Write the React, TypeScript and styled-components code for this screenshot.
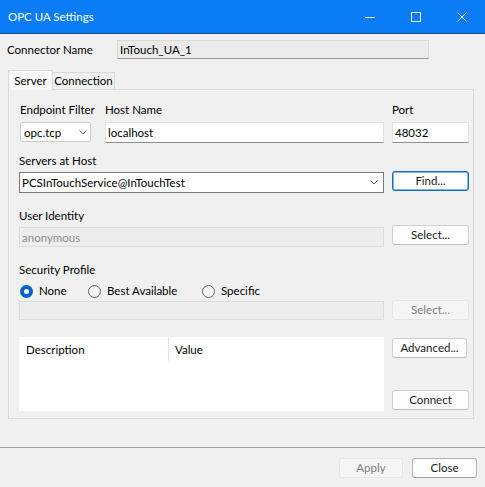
import React from "react";
import styled, { createGlobalStyle, css } from "styled-components";

const UI_FONT = `Lato, "Noto Sans", sans-serif`;
const UI_SIZE = "11.5px";

const GlobalStyle = createGlobalStyle`
  html, body {
    margin: 0;
    padding: 0;
    background: #f0f0f0;
  }
  body {
    font-family: ${UI_FONT};
    font-size: ${UI_SIZE};
    color: #000;
  }
  *, *::before, *::after {
    box-sizing: border-box;
  }
`;

/* ---------- window frame ---------- */

const Window = styled.div`
  width: 485px;
  height: 487px;
  display: flex;
  flex-direction: column;
  background: #f0f0f0;
  overflow: hidden;
`;

const TitleBar = styled.div`
  flex: none;
  height: 34px;
  display: flex;
  align-items: center;
  background: #0a7cf6;
  border-bottom: 1px solid #1d4f86;
  color: #fff;
`;

const Title = styled.div`
  flex: 1;
  padding-left: 8px;
  font-size: 11.5px;
  line-height: 16px;
`;

const CaptionButton = styled.div`
  width: 46px;
  height: 33px;
  display: flex;
  align-items: center;
  justify-content: center;
`;

const Content = styled.div`
  flex: 1;
  display: flex;
  flex-direction: column;
  padding-top: 6px;
`;

/* ---------- connector name ---------- */

const ConnectorRow = styled.div`
  display: flex;
  align-items: center;
  padding-left: 7px;
  height: 19px;
`;

const RowLabel = styled.div`
  width: 110px;
  line-height: 16px;
`;

const ReadonlyBox = styled.div`
  width: 312px;
  height: 19px;
  padding-left: 2px;
  display: flex;
  align-items: center;
  background: #ebebeb;
  border: 1px solid #d9d9d9;
  border-bottom-color: #9a9a9a;
`;

/* ---------- tabs ---------- */

const TabArea = styled.div`
  margin: 11px 11px 0 8px;
  display: flex;
  flex-direction: column;
`;

const TabStrip = styled.div`
  display: flex;
  align-items: flex-end;
  height: 20px;
  margin-bottom: -1px;
  position: relative;
  z-index: 1;
`;

const Tab = styled.div<{ $active?: boolean; $w: number }>`
  width: ${(p) => p.$w}px;
  display: flex;
  align-items: center;
  justify-content: center;
  border: 1px solid #d9d9d9;
  border-bottom: none;
  line-height: 16px;
  white-space: nowrap;
  ${(p) =>
    p.$active
      ? css`
          height: 20px;
          background: #f9f9f9;
        `
      : css`
          height: 17px;
          margin-bottom: 1px;
          margin-left: -1px;
          background: #f0f0f0;
        `}
`;

const TabPanel = styled.div`
  border: 1px solid #dadada;
  padding: 12px 5px 7px 10px;
  display: flex;
  flex-direction: column;
`;

/* ---------- form layout ---------- */

const Section = styled.div<{ $top: number; $rowGap?: number }>`
  display: grid;
  grid-template-columns: 365px 77px;
  column-gap: 8px;
  row-gap: ${(p) => p.$rowGap ?? 3}px;
  margin-top: ${(p) => p.$top}px;
  align-items: start;
`;

const EndpointGrid = styled.div`
  display: grid;
  grid-template-columns: 71px 279px;
  column-gap: 14px;
  row-gap: 4px;
  margin-left: 1px;
`;

const PortStack = styled.div`
  display: flex;
  flex-direction: column;
  gap: 4px;
`;

const FieldLabel = styled.div`
  grid-column: 1;
  line-height: 16px;
  height: 16px;
  white-space: nowrap;
`;

const EndpointLabel = styled(FieldLabel)`
  grid-column: auto;
`;

const MainCell = styled.div<{ $top?: number }>`
  grid-column: 1;
  margin-top: ${(p) => p.$top ?? 0}px;
`;

const SideCell = styled.div<{ $row: number; $nudge?: number }>`
  grid-column: 2;
  grid-row: ${(p) => p.$row};
  margin-top: ${(p) => p.$nudge ?? 0}px;
`;

const TextBox = styled.div`
  height: 21px;
  display: flex;
  align-items: center;
  padding-left: 2px;
  background: #fff;
  border: 1px solid #e3e3e3;
  border-bottom-color: #8e8e8e;
  white-space: nowrap;
`;

const DisabledBox = styled.div<{ $h: number }>`
  height: ${(p) => p.$h}px;
  display: flex;
  align-items: center;
  padding-left: 2px;
  background: #ededed;
  border: 1px solid #dcdcdc;
  color: #8d8d8d;
`;

const Combo = styled.div<{ $strong?: boolean }>`
  height: ${(p) => (p.$strong ? 21 : 20)}px;
  display: flex;
  align-items: center;
  justify-content: space-between;
  background: #fff;
  white-space: nowrap;
  ${(p) =>
    p.$strong
      ? css`
          border: 1px solid #7a7a7a;
          padding: 0 5px 0 2px;
        `
      : css`
          border: 1px solid #cccccc;
          border-radius: 2px;
          padding: 0 3px 0 3px;
        `}
`;

type Tone = "normal" | "focus" | "strong" | "disabled";

const Button = styled.button<{ $tone?: Tone; $w: number }>`
  width: ${(p) => p.$w}px;
  height: 20px;
  padding: 0;
  font-family: ${UI_FONT};
  font-size: ${UI_SIZE};
  line-height: 16px;
  border-radius: 3px;
  background: #fdfdfd;
  color: #1b1b1b;
  border: 1px solid #d0d0d0;
  border-bottom-color: #bdbdbd;
  ${(p) =>
    p.$tone === "focus" &&
    css`
      border: 1px solid #0f6cc8;
      box-shadow: inset 0 0 0 0.5px #0f6cc8;
    `}
  ${(p) =>
    p.$tone === "strong" &&
    css`
      border: 1px solid #b3b3b3;
      border-bottom-color: #9c9c9c;
    `}
  ${(p) =>
    p.$tone === "disabled" &&
    css`
      background: #f5f5f5;
      border: 1px solid #e6e6e6;
      color: #7d7d7d;
    `}
`;

/* ---------- radios ---------- */

const RadioRow = styled.div`
  grid-column: 1;
  display: grid;
  grid-template-columns: 68px 114px auto;
  height: 16px;
  align-items: center;
  margin: 5px 0 0 1px;
`;

const RadioItem = styled.label`
  display: flex;
  align-items: center;
  gap: 6px;
  line-height: 16px;
  white-space: nowrap;
`;

const RadioDot = styled.span<{ $checked?: boolean }>`
  width: 13px;
  height: 13px;
  border-radius: 50%;
  flex: none;
  display: flex;
  align-items: center;
  justify-content: center;
  ${(p) =>
    p.$checked
      ? css`
          background: #0063c6;
          &::after {
            content: "";
            width: 5px;
            height: 5px;
            border-radius: 50%;
            background: #fff;
          }
        `
      : css`
          border: 1px solid #616161;
          background: #f3f3f3;
        `}
`;

/* ---------- list view ---------- */

const ListView = styled.div`
  grid-column: 1;
  height: 74px;
  background: #fff;
`;

const ListHeader = styled.div`
  display: grid;
  grid-template-columns: 149px 1fr;
  height: 24px;
`;

const HeaderCell = styled.div<{ $divider?: boolean }>`
  display: flex;
  align-items: center;
  padding-left: ${(p) => (p.$divider ? 6 : 7)}px;
  border-left: ${(p) => (p.$divider ? "1px solid #e5e5e5" : "none")};
`;

const SideStack = styled.div`
  grid-column: 2;
  height: 74px;
  display: flex;
  flex-direction: column;
  justify-content: space-between;
  padding: 1px 0 1px;
`;

/* ---------- footer ---------- */

const Footer = styled.div`
  flex: none;
  height: 40px;
  border-top: 1px solid #a3a3a3;
  display: flex;
  justify-content: flex-end;
  align-items: flex-start;
  gap: 9px;
  padding: 10px 8px 0 0;
`;

const Chevron = ({ color = "#606060" }: { color?: string }) => (
  <svg width="8" height="5" viewBox="0 0 8 5" aria-hidden>
    <path d="M0.5 0.5 L4 4 L7.5 0.5" fill="none" stroke={color} strokeWidth="1" />
  </svg>
);

export default function App() {
  return (
    <>
      <GlobalStyle />
      <Window>
        <TitleBar>
          <Title>OPC UA Settings</Title>
          <CaptionButton>
            <svg width="10" height="10" viewBox="0 0 10 10" aria-hidden>
              <path d="M0 5.5 H10" stroke="#fff" strokeWidth="1" />
            </svg>
          </CaptionButton>
          <CaptionButton>
            <svg width="10" height="10" viewBox="0 0 10 10" aria-hidden>
              <rect x="0.5" y="0.5" width="9" height="9" fill="none" stroke="#fff" strokeWidth="1" />
            </svg>
          </CaptionButton>
          <CaptionButton>
            <svg width="10" height="10" viewBox="0 0 10 10" aria-hidden>
              <path d="M0.5 0.5 L9.5 9.5 M9.5 0.5 L0.5 9.5" stroke="#fff" strokeWidth="1" />
            </svg>
          </CaptionButton>
        </TitleBar>

        <Content>
          <ConnectorRow>
            <RowLabel>Connector Name</RowLabel>
            <ReadonlyBox>InTouch_UA_1</ReadonlyBox>
          </ConnectorRow>

          <TabArea>
            <TabStrip>
              <Tab $active $w={45}>Server</Tab>
              <Tab $w={63}>Connection</Tab>
            </TabStrip>

            <TabPanel>
              <Section $top={0}>
                <EndpointGrid>
                  <EndpointLabel>Endpoint Filter</EndpointLabel>
                  <EndpointLabel>Host Name</EndpointLabel>
                  <Combo>
                    <span>opc.tcp</span>
                    <Chevron />
                  </Combo>
                  <TextBox>localhost</TextBox>
                </EndpointGrid>
                <PortStack>
                  <FieldLabel>Port</FieldLabel>
                  <TextBox>48032</TextBox>
                </PortStack>
              </Section>

              <Section $top={10}>
                <FieldLabel>Servers at Host</FieldLabel>
                <MainCell>
                  <Combo $strong>
                    <span>PCSInTouchService@InTouchTest</span>
                    <Chevron />
                  </Combo>
                </MainCell>
                <SideCell $row={2} $nudge={-1}>
                  <Button $tone="focus" $w={77}>Find...</Button>
                </SideCell>
              </Section>

              <Section $top={15}>
                <FieldLabel>User Identity</FieldLabel>
                <MainCell>
                  <DisabledBox $h={20}>anonymous</DisabledBox>
                </MainCell>
                <SideCell $row={2} $nudge={-2}>
                  <Button $w={77}>Select...</Button>
                </SideCell>
              </Section>

              <Section $top={15} $rowGap={0}>
                <FieldLabel>Security Profile</FieldLabel>
                <RadioRow>
                  <RadioItem>
                    <RadioDot $checked />
                    None
                  </RadioItem>
                  <RadioItem>
                    <RadioDot />
                    Best Available
                  </RadioItem>
                  <RadioItem>
                    <RadioDot />
                    Specific
                  </RadioItem>
                </RadioRow>
                <MainCell $top={2}>
                  <DisabledBox $h={19} />
                </MainCell>
                <SideCell $row={3} $nudge={1}>
                  <Button $tone="disabled" $w={77}>Select...</Button>
                </SideCell>
              </Section>

              <Section $top={17}>
                <ListView>
                  <ListHeader>
                    <HeaderCell>Description</HeaderCell>
                    <HeaderCell $divider>Value</HeaderCell>
                  </ListHeader>
                </ListView>
                <SideStack>
                  <Button $w={75}>Advanced...</Button>
                  <Button $w={77}>Connect</Button>
                </SideStack>
              </Section>
            </TabPanel>
          </TabArea>
        </Content>

        <Footer>
          <Button $tone="disabled" $w={64}>Apply</Button>
          <Button $tone="strong" $w={65}>Close</Button>
        </Footer>
      </Window>
    </>
  );
}
